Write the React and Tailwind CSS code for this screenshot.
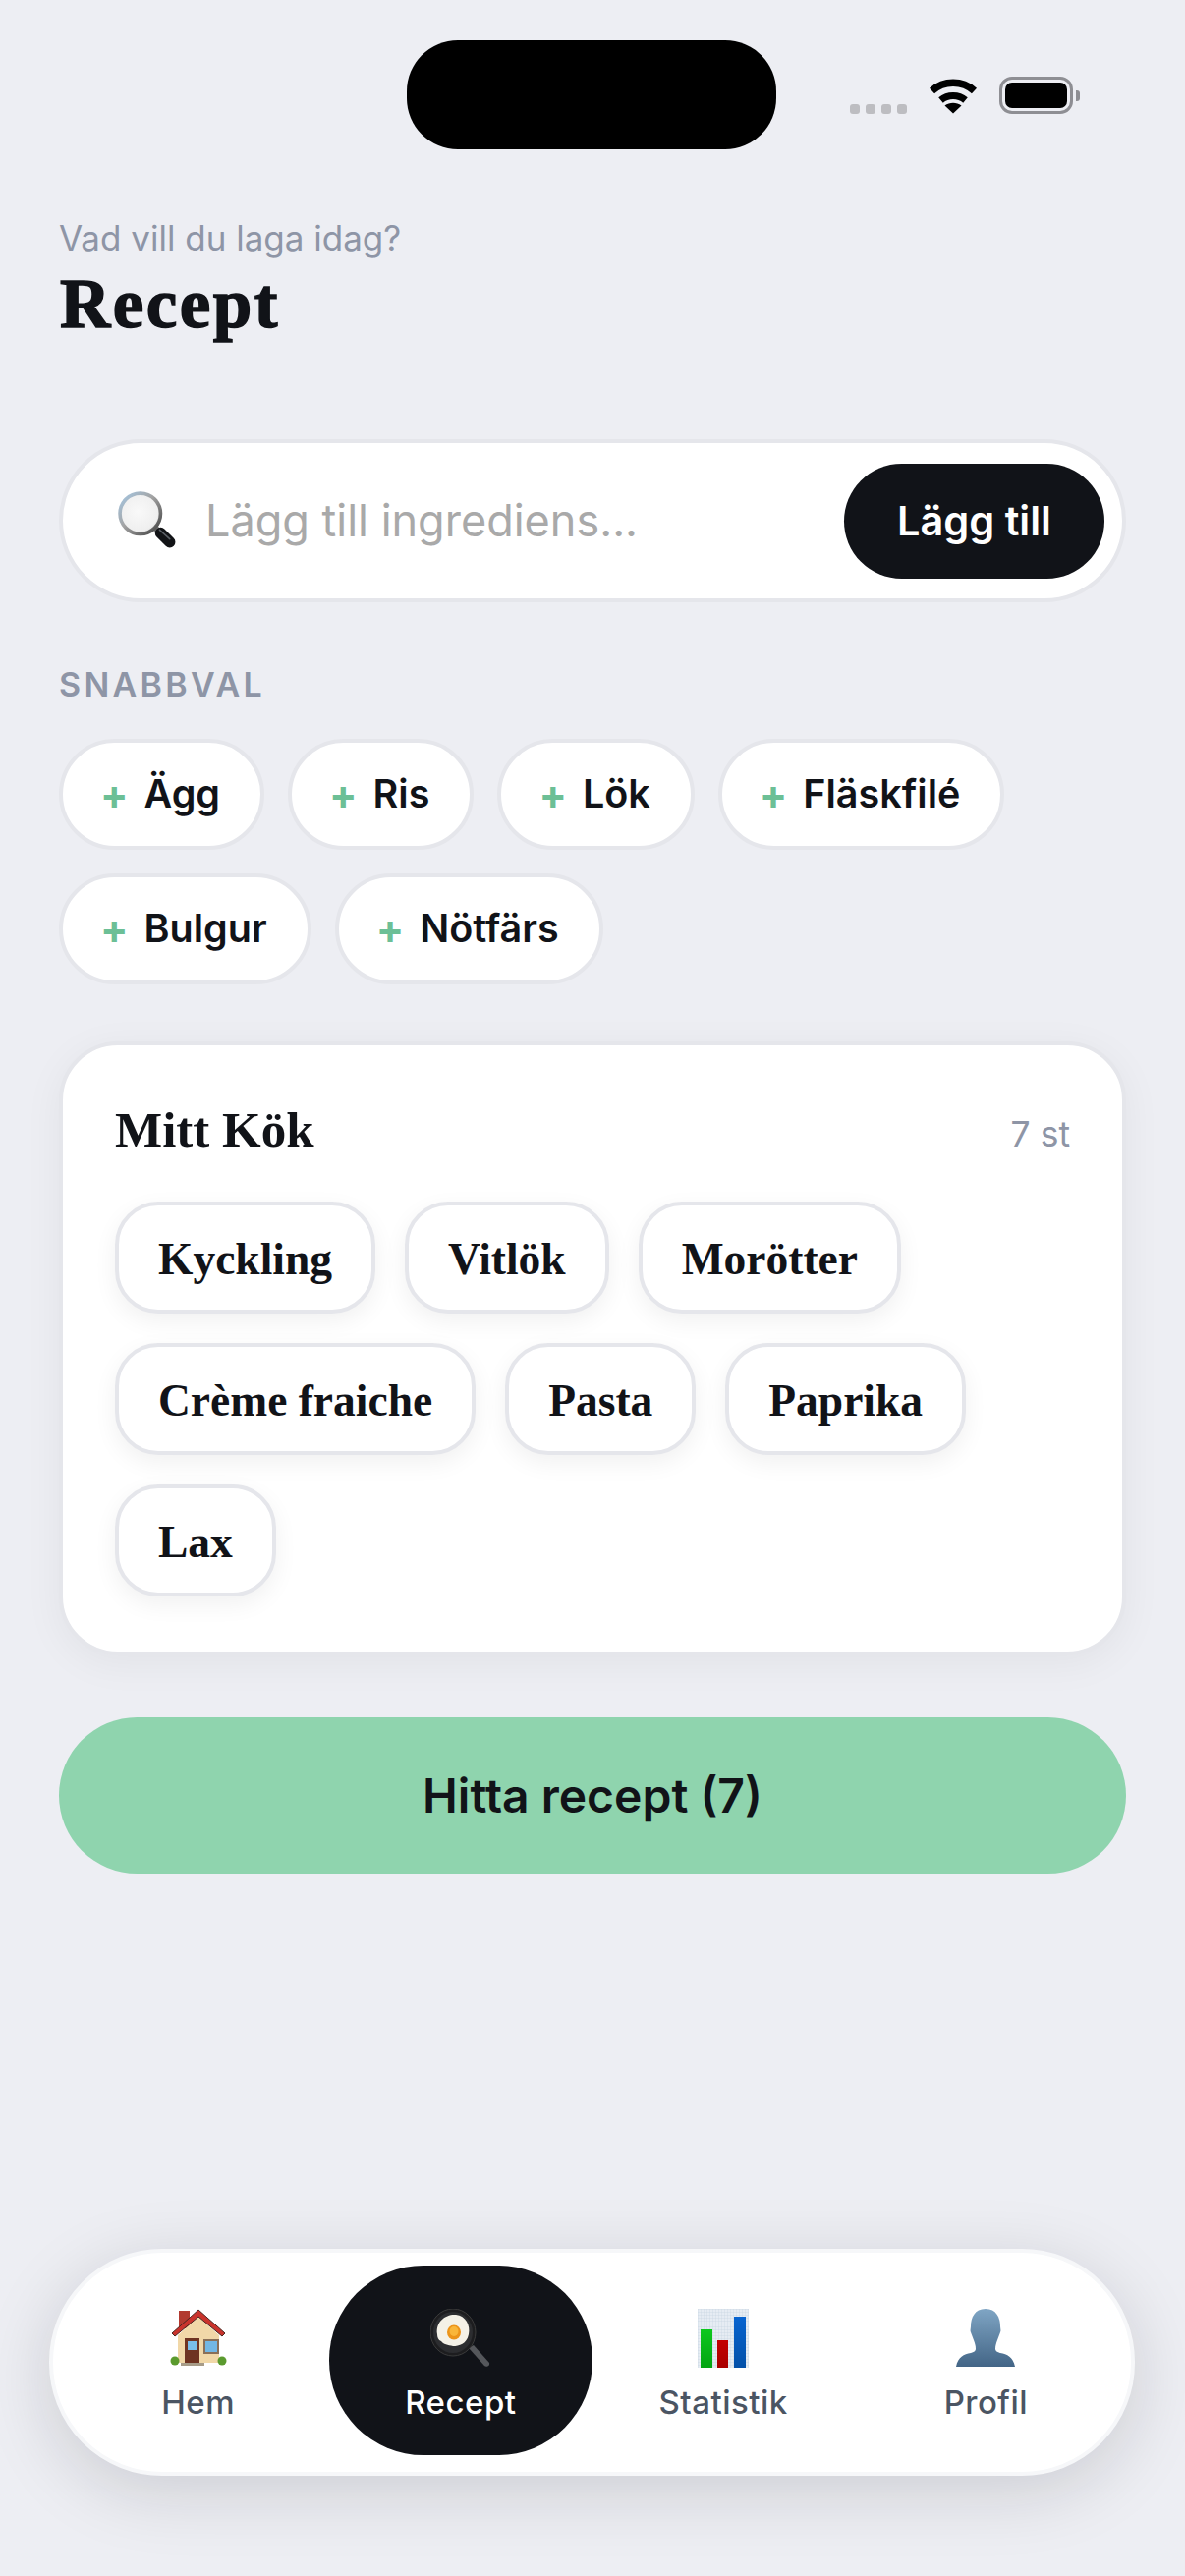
import React from 'react';

const SANS = 'font-["Inter",sans-serif]';
const SERIF = 'font-["Liberation_Serif",serif]';

const quickPicks = ['Ägg', 'Ris', 'Lök', 'Fläskfilé', 'Bulgur', 'Nötfärs'];
const pantry = ['Kyckling', 'Vitlök', 'Morötter', 'Crème fraiche', 'Pasta', 'Paprika', 'Lax'];

function Wifi() {
  return (
    <svg width="50" height="38" viewBox="0 0 50 38" fill="none">
      <path d="M3.5 14.5C15.5 3.5 34.5 3.5 46.5 14.5" stroke="#000" strokeWidth="7.5" />
      <path d="M12.5 24C19.5 18 30.5 18 37.5 24" stroke="#000" strokeWidth="7" />
      <path d="M25 37.5L16.5 29.5C21.5 25.8 28.5 25.8 33.5 29.5Z" fill="#000" />
    </svg>
  );
}

function Magnifier() {
  return (
    <svg width="60" height="60" viewBox="0 0 58 58">
      <defs>
        <linearGradient id="rim" x1="0" y1="0" x2="1" y2="1">
          <stop offset="0" stopColor="#a6c8e4" />
          <stop offset="0.45" stopColor="#a3a3a3" />
          <stop offset="1" stopColor="#3f3f3f" />
        </linearGradient>
        <radialGradient id="glass" cx="0.45" cy="0.45" r="0.6">
          <stop offset="0" stopColor="#f9f9f9" />
          <stop offset="0.8" stopColor="#efefef" />
          <stop offset="1" stopColor="#d2d2d2" />
        </radialGradient>
      </defs>
      <path d="M34 38L38 33L42 37L38 41Z" fill="#777" />
      <path d="M42 41L51 50" stroke="#121316" strokeWidth="11" strokeLinecap="round" />
      <path d="M41 38L51 47" stroke="#5c6066" strokeWidth="1.5" strokeLinecap="round" />
      <circle cx="22" cy="22" r="20" fill="url(#glass)" stroke="url(#rim)" strokeWidth="3.5" />
    </svg>
  );
}

function House() {
  return (
    <svg width="58" height="60" viewBox="0 0 58 60">
      <rect x="9" y="2" width="11" height="18" fill="#b23a30" />
      <path d="M8 27L29 8L50 27V55H8Z" fill="#f1d8a8" />
      <path d="M2 25L29 1L56 25L53 28L29 8L5 28Z" fill="#c9332c" stroke="#4a2620" strokeWidth="1" />
      <rect x="15" y="30" width="15" height="26" fill="#6e3422" />
      <rect x="18" y="33" width="9" height="9" fill="#79bde8" />
      <rect x="34" y="31" width="16" height="15" fill="#8a7058" />
      <rect x="36" y="33" width="12" height="11" fill="#72b7e4" />
      <circle cx="5" cy="53" r="4.5" fill="#5b9a2e" />
      <circle cx="53" cy="53" r="4.5" fill="#5b9a2e" />
      <rect x="11" y="55" width="24" height="3" fill="#a79c88" />
    </svg>
  );
}

function Pan() {
  return (
    <svg width="62" height="60" viewBox="0 0 62 60">
      <path d="M39 40L44 37L60 55C61 58 57 60 55 58Z" fill="#55575b" />
      <ellipse cx="23" cy="24" rx="23" ry="24" fill="#1d1d1f" stroke="#3b3b3b" strokeWidth="1" />
      <ellipse cx="23" cy="24" rx="20" ry="21" fill="#2c2d30" />
      <path d="M7 26C5 13 16 5 26 6C36 7 41 17 39 26C37 36 29 38 23 38C18 37 13 36 11 33C8 32 7 29 7 26Z" fill="#f4f1e7" />
      <ellipse cx="24" cy="24" rx="7" ry="7.5" fill="#ec941a" />
      <ellipse cx="24" cy="23" rx="4.5" ry="5" fill="#f9b63a" />
    </svg>
  );
}

function Chart() {
  return (
    <svg width="52" height="60" viewBox="0 0 52 60">
      <defs>
        <pattern id="grid" width="3" height="3" patternUnits="userSpaceOnUse">
          <rect width="3" height="3" fill="#e6ecf3" />
          <path d="M3 0H0V3" fill="none" stroke="#c3d0de" strokeWidth="0.6" />
        </pattern>
        <linearGradient id="g1" x1="0" y1="0" x2="0" y2="1">
          <stop offset="0" stopColor="#0cc81e" />
          <stop offset="1" stopColor="#04a412" />
        </linearGradient>
        <linearGradient id="g2" x1="0" y1="0" x2="0" y2="1">
          <stop offset="0" stopColor="#c40000" />
          <stop offset="1" stopColor="#a90000" />
        </linearGradient>
        <linearGradient id="g3" x1="0" y1="0" x2="0" y2="1">
          <stop offset="0" stopColor="#0864d0" />
          <stop offset="1" stopColor="#0350a8" />
        </linearGradient>
      </defs>
      <rect width="52" height="60" fill="url(#grid)" />
      <rect x="3" y="21" width="12" height="39" fill="url(#g1)" />
      <rect x="20" y="32" width="11" height="28" fill="url(#g2)" />
      <rect x="37" y="8" width="12" height="52" fill="url(#g3)" />
    </svg>
  );
}

function Bust() {
  return (
    <svg width="60" height="60" viewBox="0 0 60 60">
      <defs>
        <linearGradient id="bust" x1="0" y1="0" x2="0" y2="1">
          <stop offset="0" stopColor="#7fa5c4" />
          <stop offset="1" stopColor="#436586" />
        </linearGradient>
      </defs>
      <path
        d="M30 0C19 0 15 9 15 18C15 20 14 22 15 24C16 27 17 29 18 32C19 35 20 37 20 41C20 43 18 44 15 45C8 46 2 49 0 59H60C58 49 52 46 45 45C42 44 40 43 40 41C40 37 41 35 42 32C43 29 44 27 45 24C46 22 45 20 45 18C45 9 41 0 30 0Z"
        fill="url(#bust)"
      />
    </svg>
  );
}

function TabItem({ icon, label, active }) {
  return (
    <div
      className={`flex-1 h-[193px] flex flex-col items-center justify-start pt-[44px] rounded-[96px] ${active ? 'bg-[#111318]' : ''}`}
    >
      <div className="h-[60px] flex items-center justify-center">{icon}</div>
      <span className={`mt-[15px] text-[33px] leading-[40px] tracking-[0.5px] font-medium ${active ? 'text-white' : 'text-[#4b5563]'}`}>
        {label}
      </span>
    </div>
  );
}

export default function App() {
  return (
    <div className={`min-h-screen bg-[#edeef3] flex flex-col text-[#111318] ${SANS}`}>
      {/* status bar */}
      <div className="flex items-start pt-[41px] pl-[414px]">
        <div className="w-[376px] h-[111px] bg-black rounded-[52px]" />
        <div className="ml-[75px] mt-[37px] flex items-end">
          <div className="flex gap-[6px]">
            <div className="w-[10px] h-[10px] rounded-[3px] bg-[#bdbdc1]" />
            <div className="w-[10px] h-[10px] rounded-[3px] bg-[#bdbdc1]" />
            <div className="w-[10px] h-[10px] rounded-[3px] bg-[#bdbdc1]" />
            <div className="w-[10px] h-[10px] rounded-[3px] bg-[#bdbdc1]" />
          </div>
          <div className="ml-[22px]">
            <Wifi />
          </div>
          <div className="ml-[22px] flex items-center">
            <div className="w-[75px] h-[38px] rounded-[13px] border-[3px] border-[#8e8e93] p-[3px]">
              <div className="w-full h-full rounded-[7px] bg-black" />
            </div>
            <div className="ml-[3px] w-[4px] h-[11px] rounded-r-[3px] bg-[#8e8e93]" />
          </div>
        </div>
      </div>

      <main className="px-[60px] flex flex-col">
        <p className="mt-[68px] text-[35px] leading-[44px] text-[#8e95a6]">Vad vill du laga idag?</p>
        <h1 className={`mt-[7px] ml-[1px] text-[71px] leading-[76px] font-bold tracking-[2.5px] [-webkit-text-stroke:1.5px_#111318] ${SERIF}`}>
          Recept
        </h1>

        {/* search */}
        <div className="mt-[100px] h-[166px] w-[1086px] rounded-[83px] bg-white border-4 border-[#e5e6eb] flex items-center pl-[56px] pr-[18px]">
          <Magnifier />
          <input
            className="ml-[29px] flex-1 min-w-0 outline-none bg-transparent text-[45px] text-[#111318] placeholder:text-[#a9a9a9]"
            placeholder="Lägg till ingrediens..."
          />
          <button className="w-[265px] h-[117px] rounded-[59px] bg-[#111318] text-white text-[41.5px] font-semibold">
            Lägg till
          </button>
        </div>

        <div className="mt-[63px] text-[34px] leading-[42px] font-semibold tracking-[3.3px] text-[#8e95a6]">SNABBVAL</div>

        <div className="mt-[34px] flex flex-wrap gap-x-[24px] gap-y-[24px] w-[1086px]">
          {quickPicks.map((name) => (
            <div
              key={name}
              className="h-[113px] rounded-full bg-white border-4 border-[#e5e6eb] pl-[38px] pr-[41px] flex items-center"
            >
              <span className="text-[42px] font-bold text-[#6cbf96]">+</span>
              <span className="ml-[16px] text-[39.5px] font-semibold">{name}</span>
            </div>
          ))}
        </div>

        {/* Mitt Kök */}
        <section className="mt-[58px] w-[1086px] h-[625px] rounded-[60px] bg-white border-4 border-[#e5e6eb] shadow-[0_8px_40px_rgba(17,19,24,0.05)] px-[53px] pt-[50px]">
          <div className="flex items-center justify-between">
            <h2 className={`text-[51px] leading-[72px] font-bold ${SERIF}`}>Mitt Kök</h2>
            <span className="text-[35.5px] text-[#8e95a6] mt-[10px]">7 st</span>
          </div>
          <div className="mt-[37px] flex flex-wrap gap-x-[30px] gap-y-[30px]">
            {pantry.map((name) => (
              <div
                key={name}
                className={`h-[114px] rounded-[44px] bg-white border-4 border-[#e5e6eb] px-[40px] pt-[4px] flex items-center text-[45.5px] font-bold shadow-[0_8px_24px_rgba(17,19,24,0.06)] ${SERIF}`}
              >
                {name}
              </div>
            ))}
          </div>
        </section>

        <button className="mt-[63px] w-[1086px] h-[159px] rounded-[80px] bg-[#8fd4ae] text-[48px] font-semibold">
          Hitta recept (7)
        </button>
      </main>

      {/* tab bar */}
      <nav className="mt-auto mb-[102px] ml-[50px] w-[1105px] h-[231px] rounded-[115px] bg-white border-4 border-[#f6f7f9] shadow-[0_16px_70px_rgba(17,19,24,0.15)] px-[14px] py-[13px] flex items-start">
        <TabItem icon={<House />} label="Hem" />
        <TabItem icon={<Pan />} label="Recept" active />
        <TabItem icon={<Chart />} label="Statistik" />
        <TabItem icon={<Bust />} label="Profil" />
      </nav>
    </div>
  );
}
